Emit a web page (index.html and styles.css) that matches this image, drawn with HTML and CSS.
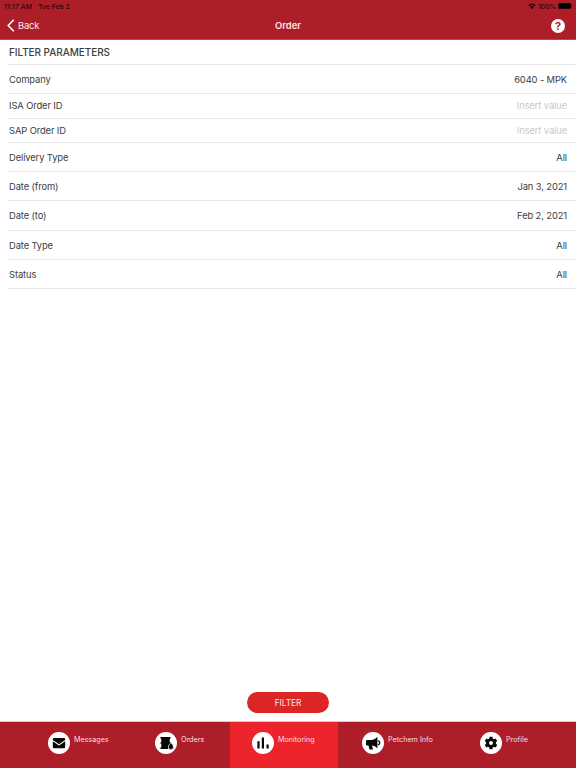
FILE: index.html
```html
<!DOCTYPE html>
<html lang="en">
<head>
<meta charset="utf-8">
<title>Order</title>
<link rel="stylesheet" href="styles.css">
</head>
<body>
<header class="header">
  <div class="status"><span class="time">11:17 AM</span><span class="date">Tue Feb 2</span>
    <svg class="wifi" viewBox="0 0 16 12"><path d="M8 12 5.5 9.4a3.6 3.6 0 0 1 5 0zM3.8 7.8a6 6 0 0 1 8.4 0l-1 1.1a4.5 4.5 0 0 0-6.4 0zM.5 4.3a10.5 10.5 0 0 1 15 0l-1.7 1.8a8.2 8.2 0 0 0-11.6 0z"/></svg>
    <span class="percent">100%</span>
    <svg class="battery" viewBox="0 0 15 6"><rect x=".3" y=".3" width="12.8" height="5.4" rx="1.3"/><path d="M13.7 2q1 1 0 2z"/></svg>
  </div>
  <nav class="nav">
    <a class="back"><svg viewBox="0 0 8 13"><path d="M6.8.8 1.2 6.5l5.600 5.700"/></svg><span>Back</span></a>
    <h1>Order</h1>
    <span class="help">?</span>
  </nav>
</header>
<main>
  <h2>FILTER PARAMETERS</h2>
  <div class="row"><span>Company</span><span>6040 - MPK</span></div>
  <div class="row short"><span>ISA Order ID</span><span class="hint">Insert value</span></div>
  <div class="row sap"><span>SAP Order ID</span><span class="hint">Insert value</span></div>
  <div class="row"><span>Delivery Type</span><span>All</span></div>
  <div class="row"><span>Date (from)</span><span>Jan 3, 2021</span></div>
  <div class="row tall"><span>Date (to)</span><span>Feb 2, 2021</span></div>
  <div class="row"><span>Date Type</span><span>All</span></div>
  <div class="row"><span>Status</span><span>All</span></div>
</main>
<button class="filter">FILTER</button>
<footer class="tabs">
  <a class="tab messages"><svg viewBox="0 0 22 22"><circle cx="11" cy="11" r="11"/><path d="M6 6h10q1.200 0 1.200 1.200v.7L11 12.200 4.800 7.900v-.7Q4.800 6 6 6zM4.800 9.300 11 13.600l6.200-4.300v5.700q0 1.200-1.200 1.200H6q-1.200 0-1.200-1.200z"/></svg><span>Messages</span></a>
  <a class="tab orders"><svg viewBox="0 0 22 22"><circle cx="11" cy="11" r="11"/><path d="M5.500 5h10v1.700h-.8v3.300h.8v1L13 14.500q-.4 1.500.6 2.500H5.500v-1.700h.8v-3.500h-.8v-1.500h.8V6.700h-.8z"/><path class="drop" d="M15.900 10.600q2.600 3 2.600 4.300a2.600 2.600 0 0 1-5.200 0q0-1.300 2.600-4.300z"/></svg><span>Orders</span></a>
  <a class="tab monitoring"><svg viewBox="0 0 22 22"><circle cx="11" cy="11" r="11"/><path d="M5.400 9.200h2.200v7.300H5.400zM9.800 5.500H12v11H9.800zM14.500 12.500h2.200v4h-2.200z"/></svg><span>Monitoring</span></a>
  <a class="tab petchem"><svg viewBox="0 0 22 22"><circle cx="11" cy="11" r="11"/><path d="M15.400 4.800v11.400q-2.300-2.700-5.300-2.800l.8 4.200H7.600l-1.200-4.200H5q-1 0-1-1V9.100q0-1 1-1h4.800q2.900 0 5.600-3.300z"/><path class="wave" d="M15.800 8.700q2 .4 2 2.100t-2 2.100"/></svg><span>Petchem Info</span></a>
  <a class="tab profile"><svg viewBox="0 0 22 22"><circle cx="11" cy="11" r="11"/><path fill-rule="evenodd" d="m9.600 4.700-.4 1.800-1.200.7-1.700-.6-1.500 2.500 1.300 1.200v1.400l-1.300 1.200 1.500 2.500 1.700-.6 1.200.7.4 1.800h2.800l.4-1.800 1.200-.7 1.700.6 1.500-2.500-1.300-1.200v-1.400l1.300-1.200-1.500-2.500-1.700.6-1.200-.7-.4-1.800zM11 9a2 2 0 1 1 0 4 2 2 0 0 1 0-4z"/></svg><span>Profile</span></a>
</footer>
</body>
</html>
```
FILE: styles.css
```css
* { box-sizing: border-box; }
body {
  margin: 0;
  height: 768px;
  display: flex;
  flex-direction: column;
  background: #fff;
  color: #3d3d3d;
  font-family: Inter, "Liberation Sans", sans-serif;
  font-size: 9.4px;
  overflow: hidden;
}
.header { height: 40px; background: #ae1e29; border-bottom: 1px solid #b94a46; flex: none; }
.status { height: 12px; display: flex; align-items: center; padding: 0 3px 0 4px; font-size: 6.8px; color: #2b080b; font-weight: 500; }
.time { width: 34px; white-space: nowrap; letter-spacing: .1px; }
.date { flex: 1; }
.wifi { width: 8px; height: 6px; margin-right: 2px; }
.percent { width: 20px; }
.battery { width: 15px; height: 6px; }
.nav { height: 27px; display: grid; grid-template-columns: 1fr auto 1fr; align-items: center; padding: 0 11px 0 7px; color: #fbe9e9; }
.back { display: flex; align-items: center; gap: 3px; font-size: 9.4px; letter-spacing: -.15px; }
.back svg { width: 8px; height: 13px; fill: none; stroke: #fff; stroke-width: 1.6; }
h1 { margin: 0 0 0 4px; font-size: 9.4px; font-weight: 600; }
.help { justify-self: end; width: 14px; height: 14px; border-radius: 50%; background: #fff; color: #ae1e29; font-size: 11px; line-height: 14px; font-weight: 700; text-align: center; }
main { flex: 1; padding-left: 8px; letter-spacing: -.12px; }
h2 { margin: 0; height: 25px; line-height: 24px; padding-left: 1px; border-bottom: 1px solid #e8e8e8; font-size: 10px; font-weight: 500; letter-spacing: -.06px; }
.row { height: 29px; display: flex; align-items: center; justify-content: space-between; padding: 0 9px 0 1px; border-bottom: 1px solid #e8e8e8; }
.short { height: 25px; padding-bottom: 1px; }
.sap { height: 24px; }
.tall { height: 30px; padding-bottom: 1px; }
.hint { color: #c9c9cb; }
.filter { flex: none; align-self: center; width: 82px; height: 21px; margin: 0 0 9px; padding: 0; border: 0; border-radius: 11px; background: #dc2626; color: #fbe5e5; font: 8.4px Inter, sans-serif; letter-spacing: -.05px; }
.tabs { flex: none; height: 46px; display: flex; padding-left: 26px; background: #ae1e29; box-shadow: 0 -.5px 0 #c98a88; color: #f7dfe0; font-size: 7.2px; }
.tab { display: flex; align-items: flex-start; gap: 4px; padding: 9.5px 0 0 22px; white-space: nowrap; }
.tab svg { width: 22px; height: 22px; flex: none; fill: #080808; }
.tab circle { fill: #fff; }
.tab span { line-height: 9px; margin-top: 3.5px; }
.tab .wave { fill: none; stroke: #080808; stroke-width: 1.3; }
.tab .drop { stroke: #fff; stroke-width: .6; }
.messages { width: 107px; }
.orders { width: 97px; }
.monitoring { width: 108px; background: #ec252d; }
.petchem { width: 118px; padding-left: 24px; }
.profile { padding-left: 24px; }
```
